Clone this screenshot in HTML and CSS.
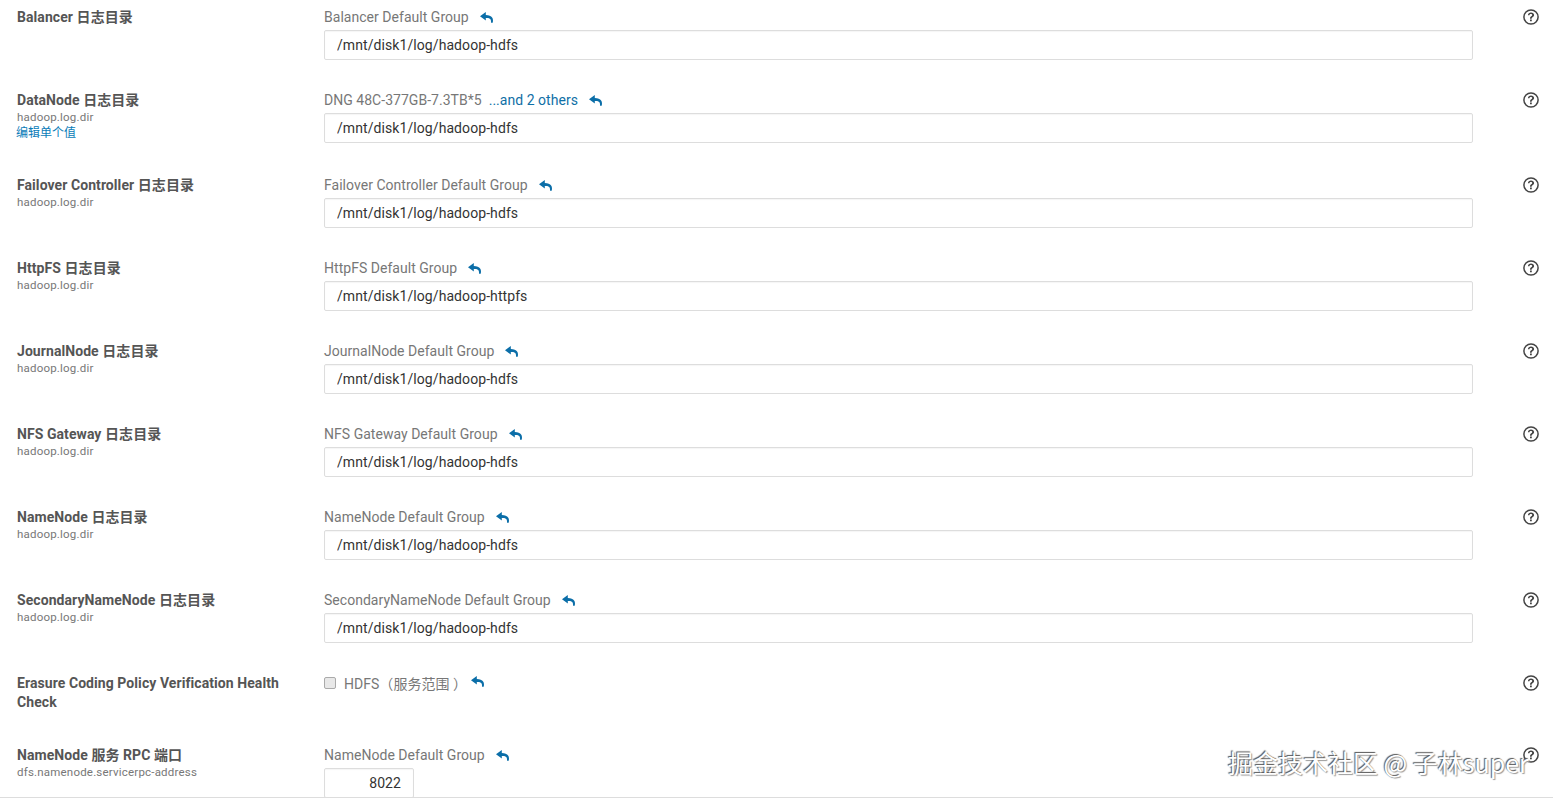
FILE: index.html
```html
<!DOCTYPE html>
<html lang="zh">
<head>
<meta charset="utf-8">
<title>Configuration</title>
<link rel="stylesheet" href="styles.css">
</head>
<body>
<svg class="defs" width="0" height="0" aria-hidden="true">
  <symbol id="undo" viewBox="0 0 13 11"><path d="M5.800 0 0 4.300l5.800 4.300V6c2.700-.2 4.300.4 4.900 1.800.3.800.4 1.800.3 3h1.700c.5-2 .4-3.900-.6-5.200C11.100 4.100 8.900 3.100 5.800 3z"/></symbol>
  <symbol id="help" viewBox="0 0 16 16"><circle cx="8" cy="8" r="7.100" fill="none" stroke="currentColor" stroke-width="1.500"/><path d="M4.900 6.200C5.100 4.400 6.300 3.500 8 3.500c1.800 0 3.100.9 3.100 2.400 0 1.100-.6 1.700-1.500 2.300-.7.500-.9.800-.9 1.500H7c0-1.200.3-1.800 1.200-2.400.7-.5 1-.8 1-1.300 0-.6-.5-1-1.300-1-.9 0-1.300.5-1.500 1.300zM7 10.400h1.800v1.800H7z" fill="currentColor"/></symbol>
</svg>
<main class="page">
  <section class="row">
    <div class="label"><div class="name">Balancer 日志目录</div></div>
    <div class="value"><div class="scope"><span>Balancer Default Group</span><svg class="undo"><use href="#undo"/></svg></div><input class="field" value="/mnt/disk1/log/hadoop-hdfs"></div>
    <svg class="help"><use href="#help"/></svg>
  </section>
  <section class="row row-tall">
    <div class="label"><div class="name">DataNode 日志目录</div><div class="key">hadoop.log.dir</div><a class="edit">编辑单个值</a></div>
    <div class="value"><div class="scope"><span>DNG 48C-377GB-7.3TB*5</span><a class="others">...and 2 others</a><svg class="undo"><use href="#undo"/></svg></div><input class="field" value="/mnt/disk1/log/hadoop-hdfs"></div>
    <svg class="help"><use href="#help"/></svg>
  </section>
  <section class="row">
    <div class="label"><div class="name">Failover Controller 日志目录</div><div class="key">hadoop.log.dir</div></div>
    <div class="value"><div class="scope"><span>Failover Controller Default Group</span><svg class="undo"><use href="#undo"/></svg></div><input class="field" value="/mnt/disk1/log/hadoop-hdfs"></div>
    <svg class="help"><use href="#help"/></svg>
  </section>
  <section class="row">
    <div class="label"><div class="name">HttpFS 日志目录</div><div class="key">hadoop.log.dir</div></div>
    <div class="value"><div class="scope"><span>HttpFS Default Group</span><svg class="undo"><use href="#undo"/></svg></div><input class="field" value="/mnt/disk1/log/hadoop-httpfs"></div>
    <svg class="help"><use href="#help"/></svg>
  </section>
  <section class="row">
    <div class="label"><div class="name">JournalNode 日志目录</div><div class="key">hadoop.log.dir</div></div>
    <div class="value"><div class="scope"><span>JournalNode Default Group</span><svg class="undo"><use href="#undo"/></svg></div><input class="field" value="/mnt/disk1/log/hadoop-hdfs"></div>
    <svg class="help"><use href="#help"/></svg>
  </section>
  <section class="row">
    <div class="label"><div class="name">NFS Gateway 日志目录</div><div class="key">hadoop.log.dir</div></div>
    <div class="value"><div class="scope"><span>NFS Gateway Default Group</span><svg class="undo"><use href="#undo"/></svg></div><input class="field" value="/mnt/disk1/log/hadoop-hdfs"></div>
    <svg class="help"><use href="#help"/></svg>
  </section>
  <section class="row">
    <div class="label"><div class="name">NameNode 日志目录</div><div class="key">hadoop.log.dir</div></div>
    <div class="value"><div class="scope"><span>NameNode Default Group</span><svg class="undo"><use href="#undo"/></svg></div><input class="field" value="/mnt/disk1/log/hadoop-hdfs"></div>
    <svg class="help"><use href="#help"/></svg>
  </section>
  <section class="row">
    <div class="label"><div class="name">SecondaryNameNode 日志目录</div><div class="key">hadoop.log.dir</div></div>
    <div class="value"><div class="scope"><span>SecondaryNameNode Default Group</span><svg class="undo"><use href="#undo"/></svg></div><input class="field" value="/mnt/disk1/log/hadoop-hdfs"></div>
    <svg class="help"><use href="#help"/></svg>
  </section>
  <section class="row row-check">
    <div class="label"><div class="name name-wrap">Erasure Coding Policy Verification Health Check</div></div>
    <div class="value"><div class="scope scope-check"><span class="box"></span><span class="check-text">HDFS（服务范围 ）</span><svg class="undo undo-check"><use href="#undo"/></svg></div></div>
    <svg class="help"><use href="#help"/></svg>
  </section>
  <section class="row">
    <div class="label"><div class="name">NameNode 服务 RPC 端口</div><div class="key">dfs.namenode.servicerpc-address</div></div>
    <div class="value"><div class="scope"><span>NameNode Default Group</span><svg class="undo"><use href="#undo"/></svg></div><input class="field field-port" value="8022"></div>
    <svg class="help"><use href="#help"/></svg>
  </section>
  <div class="watermark">掘金技术社区 @ 子林super</div>
</main>
</body>
</html>
```
FILE: styles.css
```css
* { box-sizing: border-box; }
html, body { margin: 0; height: 100%; overflow: hidden; background: #fff; }
body { font-family: Roboto, "Noto Sans CJK SC", sans-serif; font-size: 14px; color: #555; }
.defs { position: absolute; }
.page { position: relative; height: 798px; overflow: hidden; border-bottom: 1px solid #ddd; padding: 8px 14px 0 17px; }
.row { display: flex; height: 83px; }
.row-tall { height: 85px; }
.row-check { height: 72px; }
.label { width: 307px; flex: none; padding-right: 20px; }
.name { font-weight: 700; font-size: 14px; line-height: 18px; color: #555; letter-spacing: .07px; }
.name-wrap { line-height: 19px; }
.key { font-size: 11.500px; line-height: 15px; color: #777; margin-top: 1px; letter-spacing: .2px; }
.edit { display: block; font-size: 12px; line-height: 15px; color: #0a7cb8; margin: 1px 0 0 -1px; }
.value { width: 1149px; flex: none; }
.scope { display: flex; align-items: center; height: 18px; color: #777; letter-spacing: .03px; }
.others { margin-left: 7px; color: #0f6fa6; }
.undo { width: 13px; height: 11px; margin-left: 11px; fill: #0b6ea8; flex: none; }
.field { display: block; width: 100%; height: 30px; margin-top: 4px; padding: 0 12px; border: 1px solid #ddd; border-radius: 2px; background: #fff; font: 14px Roboto, sans-serif; letter-spacing: .08px; color: #333; outline: 0; box-shadow: inset 0 1px 1px rgba(0,0,0,.04); }
.field-port { width: 90px; text-align: right; }
.box { width: 12px; height: 12px; border: 1px solid #aaa; border-radius: 2px; background: #e8e8e8; flex: none; }
.check-text { margin-left: 8px; }
.undo-check { margin-left: 4px; position: relative; top: -2px; }
.help { width: 16px; height: 16px; margin-left: 50px; margin-top: 1px; color: #444; flex: none; }
.watermark { position: absolute; left: 1228px; top: 745px; font: 25px/34px "Noto Sans CJK SC", sans-serif; color: #fff; text-shadow: -1px -1px 1px #555, 1px 1px 1px #999; white-space: nowrap; }
```
